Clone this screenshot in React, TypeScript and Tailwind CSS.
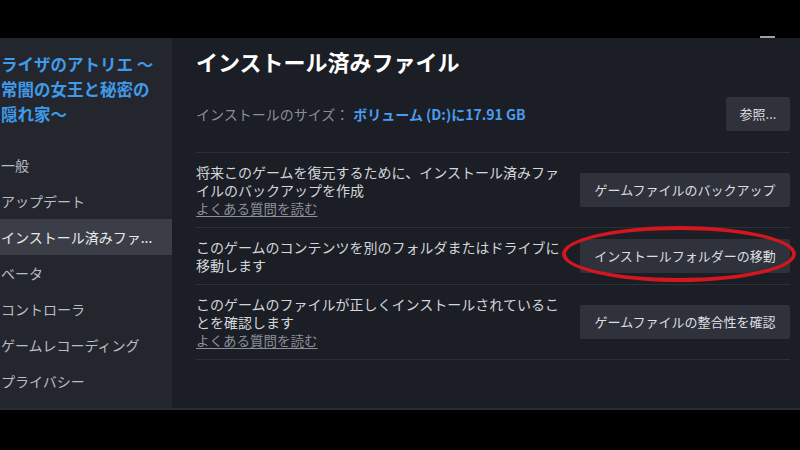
import React from "react";

const font = { fontFamily: '"Noto Sans CJK JP", "Noto Sans", sans-serif' };

const menu = [
  "一般",
  "アップデート",
  "インストール済みファ...",
  "ベータ",
  "コントローラ",
  "ゲームレコーディング",
  "プライバシー",
];

function Row({
  text,
  link,
  button,
  circled,
}: {
  text: string;
  link?: boolean;
  button: string;
  circled?: boolean;
}) {
  return (
    <div className="flex items-center justify-between border-b border-[#2d3038] py-[10px]">
      <div className="w-[368px] text-[14px] leading-[18px] text-[#d3d6db]">
        <div>{text}</div>
        {link && (
          <div className="pt-[1px] text-[13.5px] leading-[17px] text-[#8c9099] underline underline-offset-2">
            よくある質問を読む
          </div>
        )}
      </div>
      <div className="relative">
        <div className="flex h-[34px] w-[210px] items-center justify-center rounded-[2px] bg-[#2f323a] text-[13px] text-[#dcdfe3]">
          {button}
        </div>
        {circled && (
          <div className="absolute -left-[18px] -top-[13px] h-[56px] w-[234px] rounded-[50%] border-[4px] border-[#d3161f]" />
        )}
      </div>
    </div>
  );
}

export default function App() {
  return (
    <div className="flex h-[450px] w-[800px] flex-col bg-black" style={font}>
      <div className="relative h-[38px] shrink-0 bg-black">
        <div className="absolute bottom-0 left-[760px] h-[2px] w-[15px] bg-[#9aa0a8]" />
      </div>
      <div className="flex h-[372px] shrink-0 border-b-[2px] border-[#2a2d34]">
        <div className="w-[172px] shrink-0 bg-[#24262d]">
          <div className="pl-[1px] pt-[14px] text-[16.5px] font-bold leading-[25px] text-[#3f9be9]">
            ライザのアトリエ ～<br />
            常闇の女王と秘密の<br />
            隠れ家～
          </div>
          <div className="mt-[20px] flex flex-col">
            {menu.map((m, i) => (
              <div
                key={m}
                className={
                  "flex h-[36px] items-center pl-[1px] text-[14px] " +
                  (i === 2 ? "bg-[#3b3e47] text-[#e6e8eb]" : "text-[#b9bdc4]")
                }
              >
                {m}
              </div>
            ))}
          </div>
        </div>
        <div className="flex-1 bg-[#1b1e25] pl-[24px] pr-[10px]">
          <div className="pt-[8px] text-[22px] font-bold leading-[30px] text-white">
            インストール済みファイル
          </div>
          <div className="mt-[21px] flex items-center justify-between border-b border-[#2d3038] pb-[21px]">
            <div className="text-[14px]">
              <span className="text-[#8a8f98]">インストールのサイズ：</span>
              <span className="ml-[4px] font-semibold text-[#4b9df0]">ボリューム (D:)に17.91 GB</span>
            </div>
            <div className="flex h-[34px] w-[64px] items-center justify-center rounded-[2px] bg-[#2f323a] text-[13px] text-[#dcdfe3]">
              参照...
            </div>
          </div>
          <Row
            text="将来このゲームを復元するために、インストール済みファイルのバックアップを作成"
            link
            button="ゲームファイルのバックアップ"
          />
          <Row
            text="このゲームのコンテンツを別のフォルダまたはドライブに移動します"
            button="インストールフォルダーの移動"
            circled
          />
          <Row
            text="このゲームのファイルが正しくインストールされていることを確認します"
            link
            button="ゲームファイルの整合性を確認"
          />
        </div>
      </div>
      <div className="flex-1 bg-black" />
    </div>
  );
}
